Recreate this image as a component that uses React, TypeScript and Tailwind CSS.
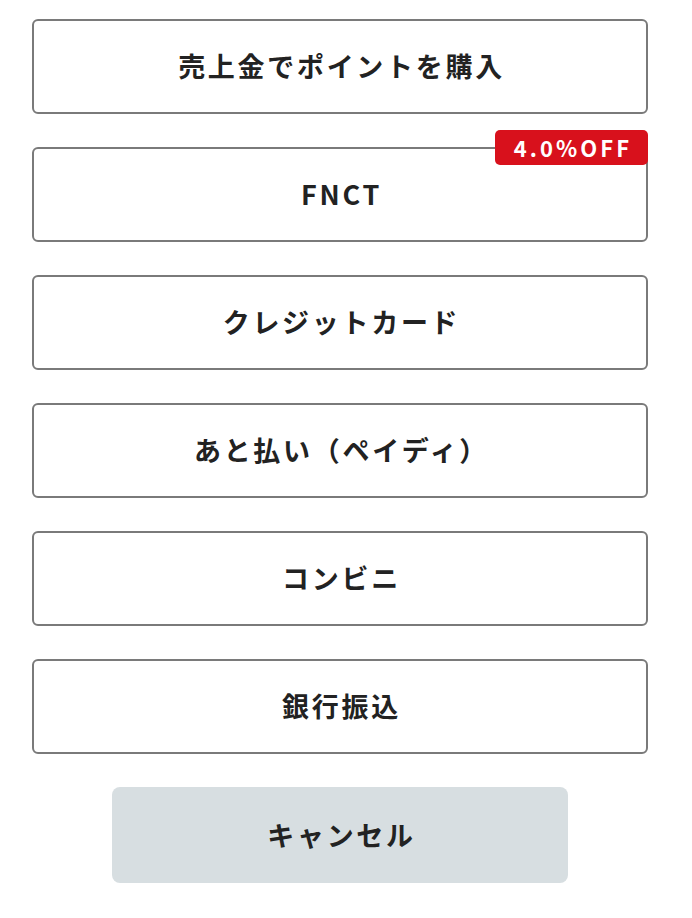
import React from 'react';

const methods = [
  { label: '売上金でポイントを購入' },
  { label: 'FNCT', badge: '4.0%OFF' },
  { label: 'クレジットカード' },
  { label: 'あと払い（ペイディ）' },
  { label: 'コンビニ' },
  { label: '銀行振込' },
];

export default function App() {
  return (
    <div
      className="min-h-[918px] bg-white pl-[32px] pt-[19px] text-[#222]"
      style={{ fontFamily: '"Noto Sans CJK JP", "Noto Sans", sans-serif' }}
    >
      <div className="flex w-[616px] flex-col gap-[33px]">
        {methods.map((m) => (
          <div key={m.label} className="relative">
            <button
              type="button"
              className="flex h-[95px] w-full items-center justify-center rounded-[6px] border-2 border-[#7a7a7a] bg-white pl-[3px] text-[27px] font-bold tracking-[0.1em]"
            >
              {m.label}
            </button>
            {m.badge && (
              <span className="absolute right-0 top-[-17px] flex h-[35px] w-[153px] items-center justify-center rounded-[5px] bg-[#d8111c] pl-[3px] text-[22px] font-bold tracking-[0.14em] text-white">
                {m.badge}
              </span>
            )}
          </div>
        ))}
        <div className="flex justify-center">
          <button
            type="button"
            className="flex h-[96px] w-[456px] items-center justify-center rounded-[8px] bg-[#d7dee1] pl-[3px] text-[27px] font-bold tracking-[0.1em]"
          >
            キャンセル
          </button>
        </div>
      </div>
    </div>
  );
}
